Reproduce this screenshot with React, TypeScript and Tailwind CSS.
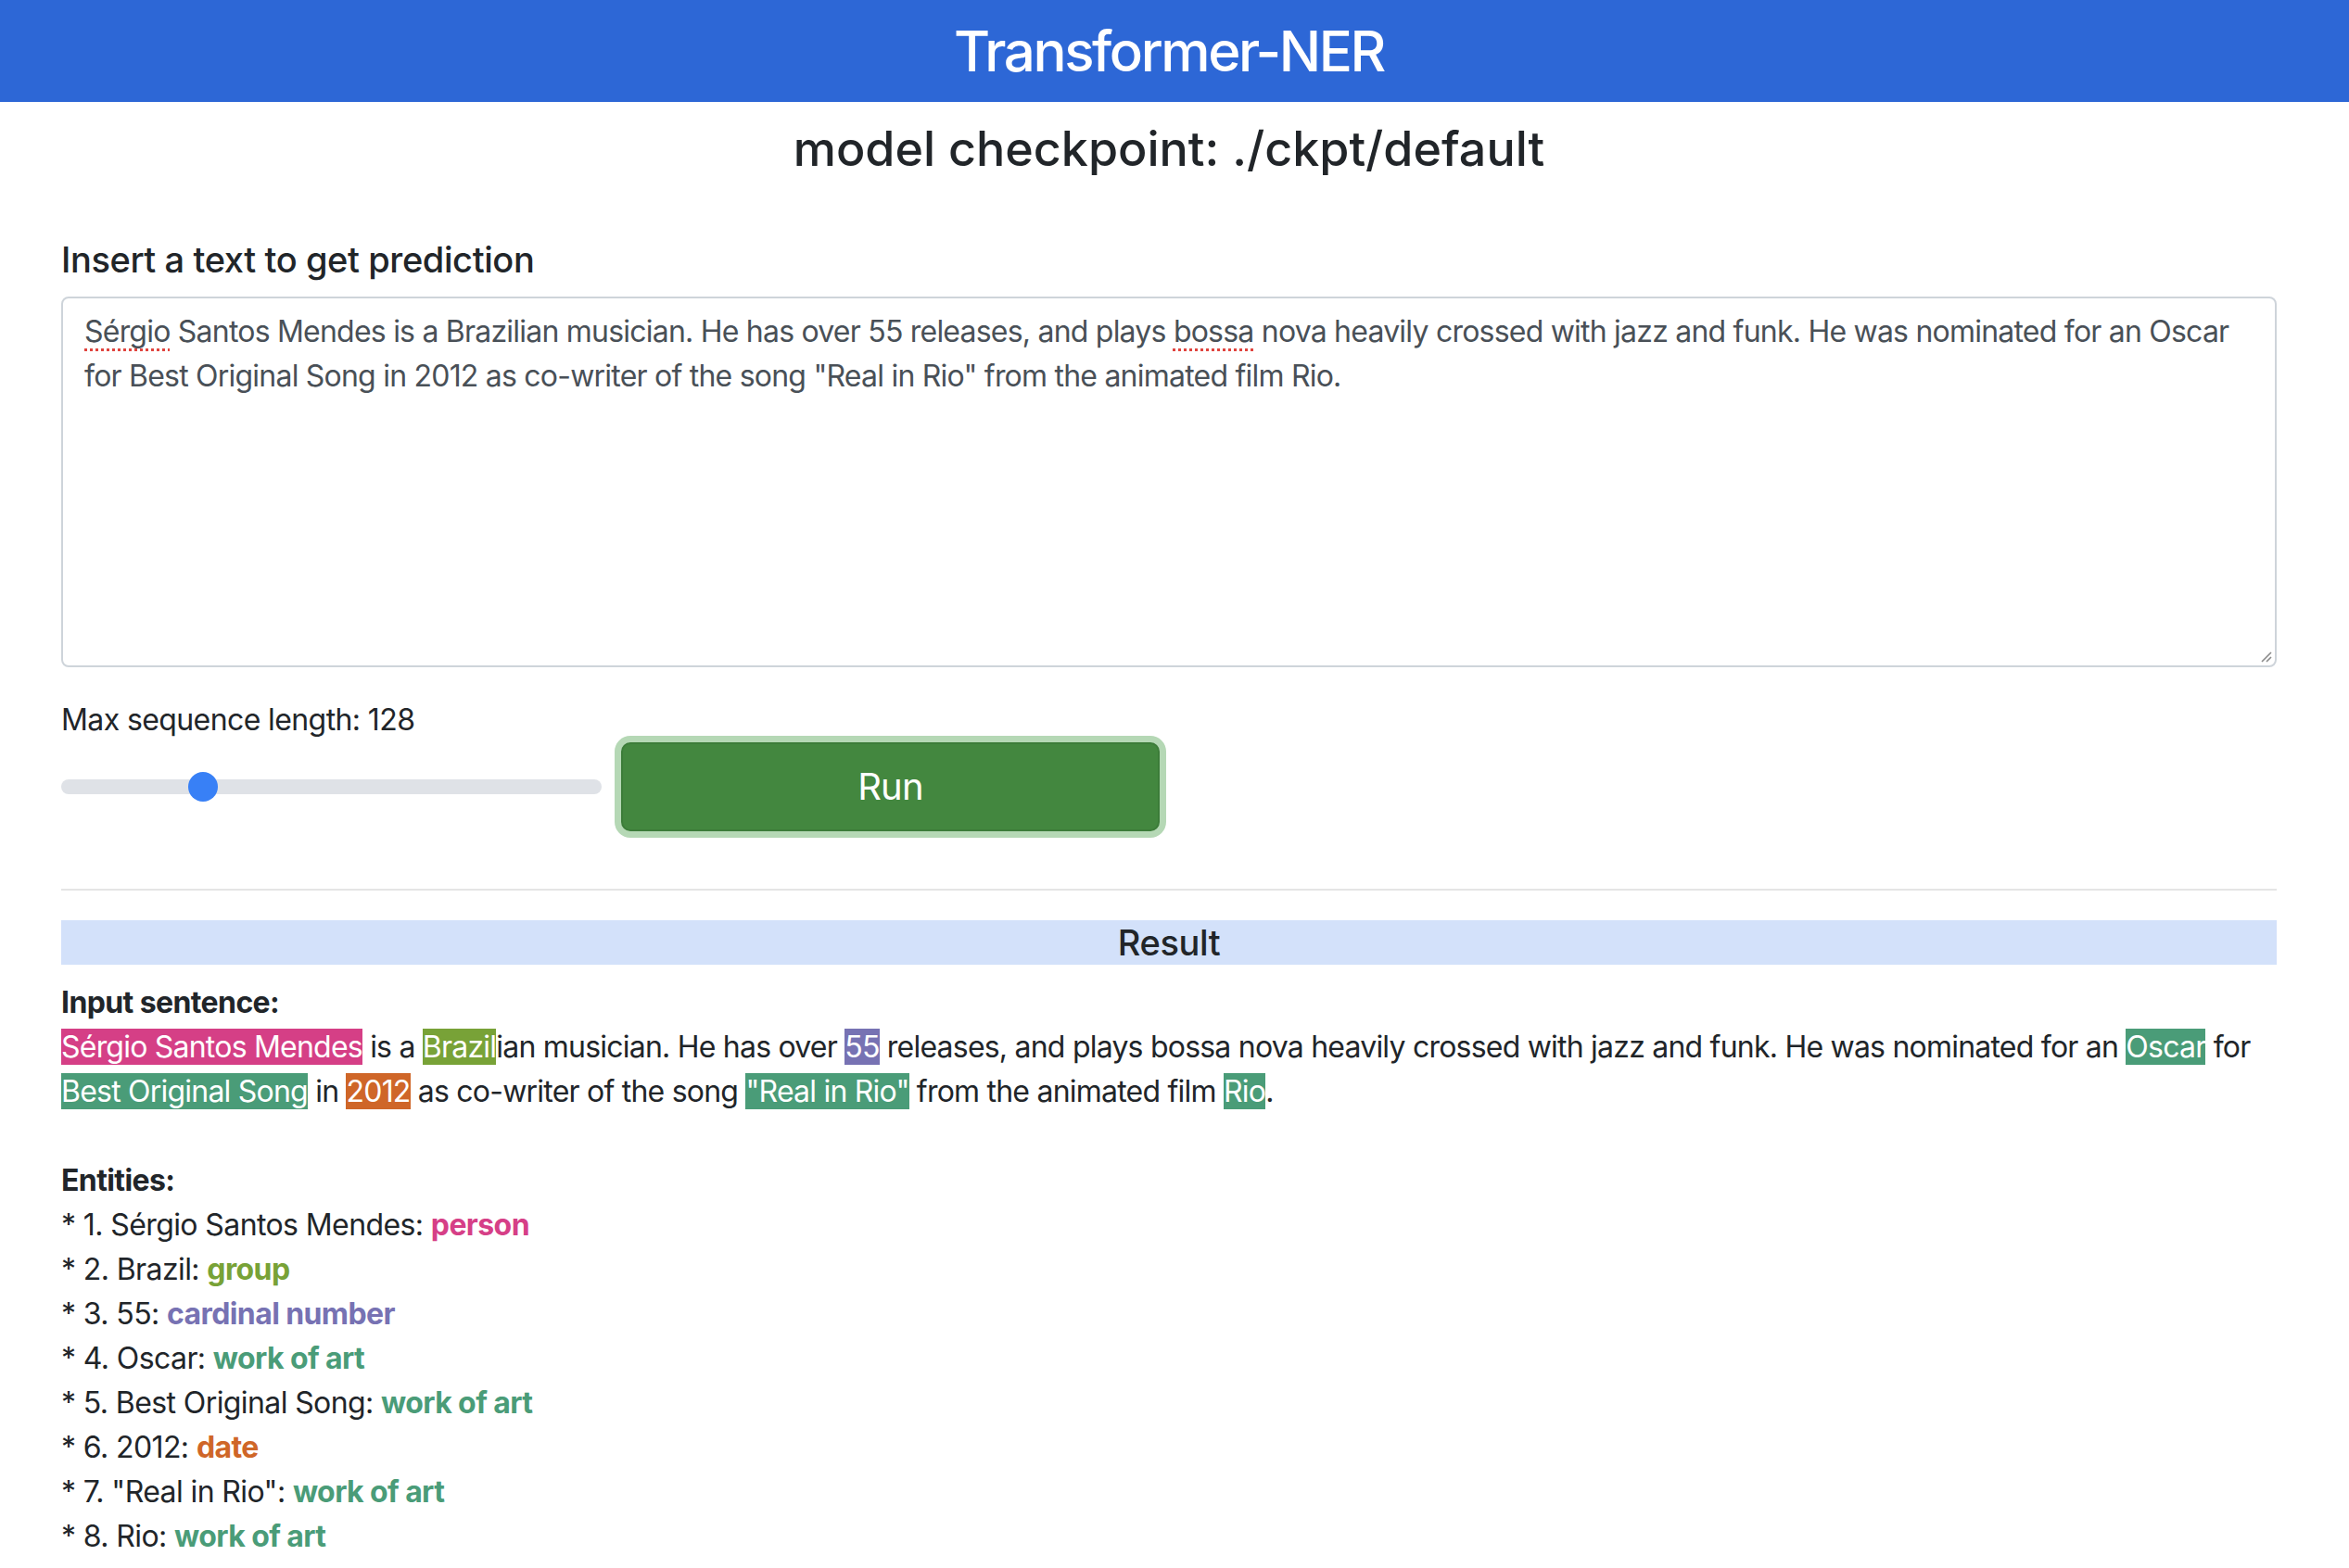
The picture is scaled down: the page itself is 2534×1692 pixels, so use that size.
import React from "react";

const FONT = { fontFamily: "Inter, 'Liberation Sans', sans-serif" };

type Seg = { t: string; c?: string };

const line1: Seg[] = [
  { t: "Sérgio Santos Mendes", c: "bg-[#d53f86]" },
  { t: " is a " },
  { t: "Brazil", c: "bg-[#78a237]" },
  { t: "ian musician. He has over " },
  { t: "55", c: "bg-[#7772b3]" },
  { t: " releases, and plays bossa nova heavily crossed with jazz and funk. He was nominated for an " },
  { t: "Oscar", c: "bg-[#4a9c78]" },
  { t: " for" },
];

const line2: Seg[] = [
  { t: "Best Original Song", c: "bg-[#4a9c78]" },
  { t: " in " },
  { t: "2012", c: "bg-[#cf6628]" },
  { t: " as co-writer of the song " },
  { t: '"Real in Rio"', c: "bg-[#4a9c78]" },
  { t: " from the animated film " },
  { t: "Rio", c: "bg-[#4a9c78]" },
  { t: "." },
];

const entities: { n: string; label: string; c: string }[] = [
  { n: "1. Sérgio Santos Mendes: ", label: "person", c: "text-[#d63f87]" },
  { n: "2. Brazil: ", label: "group", c: "text-[#78a237]" },
  { n: "3. 55: ", label: "cardinal number", c: "text-[#7772b3]" },
  { n: "4. Oscar: ", label: "work of art", c: "text-[#4a9c78]" },
  { n: "5. Best Original Song: ", label: "work of art", c: "text-[#4a9c78]" },
  { n: "6. 2012: ", label: "date", c: "text-[#cf6628]" },
  { n: '7. "Real in Rio": ', label: "work of art", c: "text-[#4a9c78]" },
  { n: "8. Rio: ", label: "work of art", c: "text-[#4a9c78]" },
];

function Segs({ segs }: { segs: Seg[] }) {
  return (
    <div className="whitespace-nowrap tracking-[-0.78px]">
      {segs.map((s, i) =>
        s.c ? (
          <span key={i} className={`${s.c} text-white`}>
            {s.t}
          </span>
        ) : (
          <span key={i}>{s.t}</span>
        )
      )}
    </div>
  );
}

const spell = "underline decoration-dotted decoration-[#e0443e] decoration-[3px] underline-offset-[7px]";

export default function App() {
  return (
    <div className="min-h-[1692px] bg-white text-[#212529] text-[32px] leading-[48px] tracking-[-0.6px]" style={FONT}>
      <header className="h-[110px] bg-[#2d67d6] flex items-center justify-center pl-[66px] pr-[78px]">
        <h1 className="text-[60px] leading-[72px] font-medium text-white tracking-[-2.4px]">Transformer-NER</h1>
      </header>

      <main className="pl-[66px] pr-[78px]">
        <h2 className="mt-[22px] text-center text-[52px] leading-[58px] font-medium tracking-normal">model checkpoint: ./ckpt/default</h2>

        <h3 className="mt-[66px] text-[38px] leading-[48px] font-medium tracking-[-0.4px]">Insert a text to get prediction</h3>

        <div className="relative mt-[16px] h-[400px] border-2 border-[#ced4da] rounded-[8px] px-[23px] py-[12px] text-[#495057] tracking-[-0.78px]">
          <div className="whitespace-nowrap">
            <span className={spell}>Sérgio</span> Santos Mendes is a Brazilian musician. He has over 55 releases, and plays{" "}
            <span className={spell}>bossa</span> nova heavily crossed with jazz and funk. He was nominated for an Oscar
          </div>
          <div className="whitespace-nowrap">
            for Best Original Song in 2012 as co-writer of the song "Real in Rio" from the animated film Rio.
          </div>
          <svg className="absolute right-[3px] bottom-[3px]" width="14" height="14" viewBox="0 0 14 14">
            <path d="M13 3 L3 13 M13 8 L8 13" stroke="#8a8a8a" strokeWidth="1.6" fill="none" />
          </svg>
        </div>

        <div className="mt-[33px]">Max sequence length: 128</div>
        <div className="flex items-center gap-[21px]">
          <div className="relative w-[583px] h-[16px] rounded-full bg-[#dfe2e7]">
            <div className="absolute left-[137px] top-[-8px] w-[32px] h-[32px] rounded-full bg-[#3880f6]" />
          </div>
          <button className="w-[581px] h-[96px] rounded-[10px] border-2 border-[#3c7c39] bg-[#43873f] text-white text-[40px] leading-[60px] tracking-[-0.8px] shadow-[0_0_0_7px_#b5d8b5]">
            Run
          </button>
        </div>

        <hr className="mt-[62px] border-0 border-t-2 border-[#e5e5e5]" />

        <div className="mt-[32px] h-[48px] bg-[#d3e1fa] text-center text-[38px] leading-[48px] font-medium tracking-[-0.4px]">Result</div>

        <div className="mt-[17px]">
          <div className="font-bold">Input sentence:</div>
          <Segs segs={line1} />
          <Segs segs={line2} />
          <div className="h-[48px]" />
          <div className="font-bold">Entities:</div>
          {entities.map((e, i) => (
            <div key={i}>
              * {e.n}
              <span className={`font-bold ${e.c}`}>{e.label}</span>
            </div>
          ))}
        </div>
      </main>
    </div>
  );
}
